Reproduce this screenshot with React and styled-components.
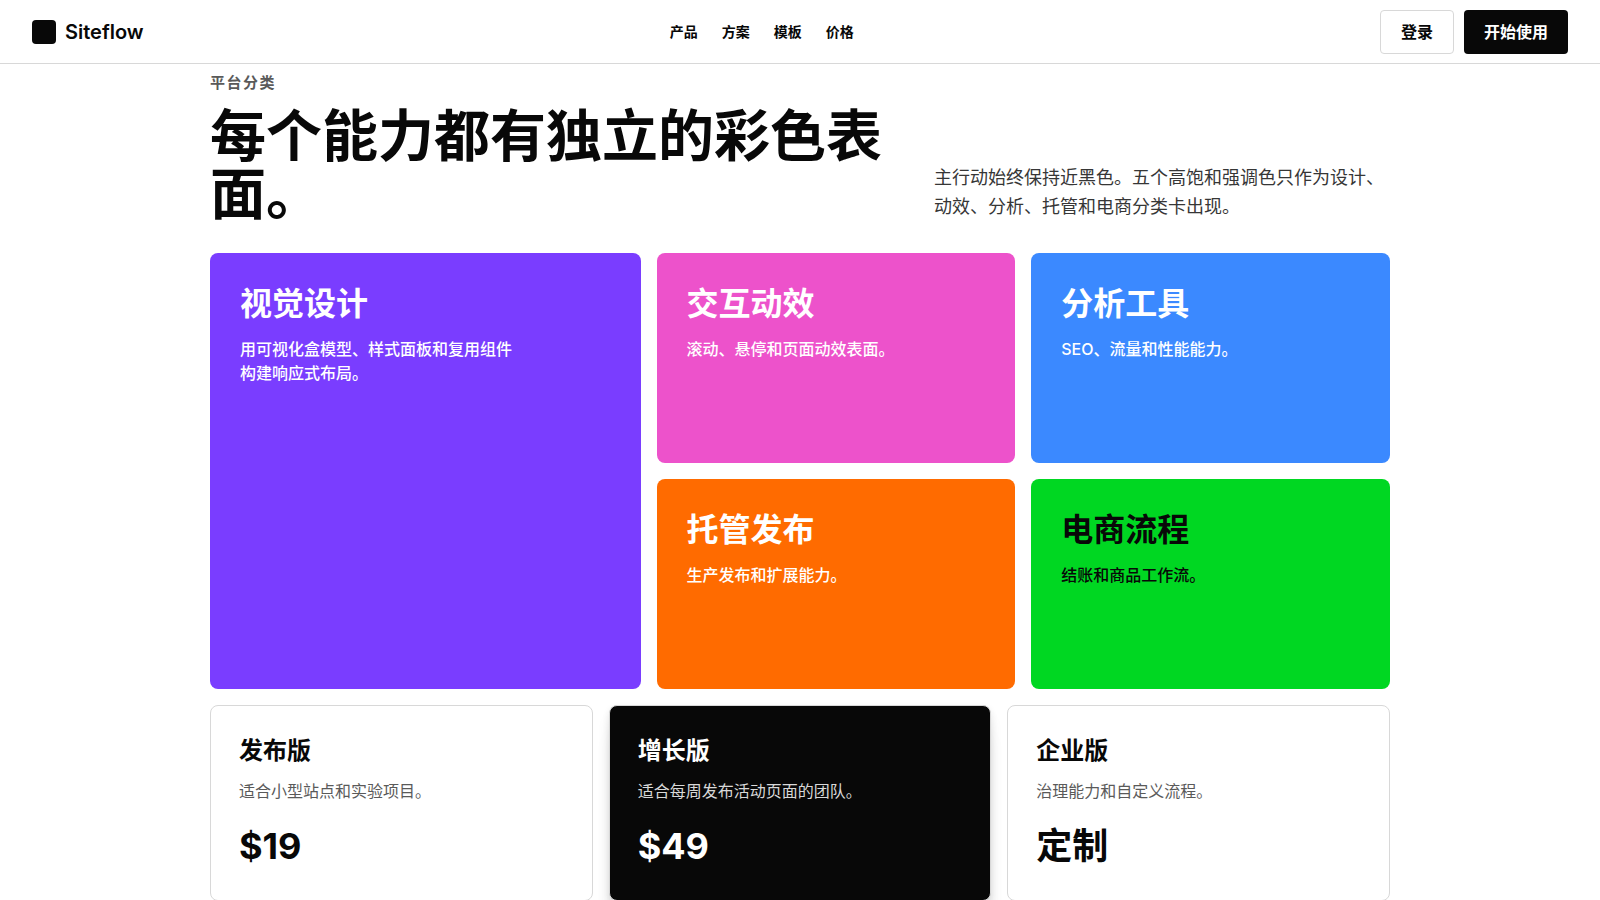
import React from 'react';
import styled, { createGlobalStyle } from 'styled-components';

const colors = {
  ink: '#080808',
  white: '#ffffff',
  line: '#d8d8d8',
  body: '#363636',
  muted: '#5a5a5a',
  purple: '#7a3dff',
  pink: '#ed52cb',
  blue: '#3b89ff',
  orange: '#ff6b00',
  green: '#00d722',
};

const NAV_ITEMS = ['产品', '方案', '模板', '价格'];

const CATEGORIES = [
  {
    title: '视觉设计',
    text: '用可视化盒模型、样式面板和复用组件构建响应式布局。',
    color: colors.purple,
    tall: true,
  },
  {
    title: '交互动效',
    text: '滚动、悬停和页面动效表面。',
    color: colors.pink,
  },
  {
    title: '分析工具',
    text: 'SEO、流量和性能能力。',
    color: colors.blue,
  },
  {
    title: '托管发布',
    text: '生产发布和扩展能力。',
    color: colors.orange,
  },
  {
    title: '电商流程',
    text: '结账和商品工作流。',
    color: colors.green,
    dark: true,
  },
];

const PLANS = [
  { name: '发布版', text: '适合小型站点和实验项目。', price: '$19' },
  {
    name: '增长版',
    text: '适合每周发布活动页面的团队。',
    price: '$49',
    featured: true,
  },
  { name: '企业版', text: '治理能力和自定义流程。', price: '定制' },
];

function App() {
  return (
    <>
      <GlobalStyle />
      <Header>
        <Brand href="#">
          <BrandMark />
          Siteflow
        </Brand>
        <Nav>
          {NAV_ITEMS.map((item) => (
            <a href="#" key={item}>
              {item}
            </a>
          ))}
        </Nav>
        <Actions>
          <OutlineButton type="button">登录</OutlineButton>
          <Button type="button">开始使用</Button>
        </Actions>
      </Header>
      <Main>
        <SectionHead>
          <div>
            <Eyebrow>平台分类</Eyebrow>
            <Title>每个能力都有独立的彩色表面。</Title>
          </div>
          <Lead>
            主行动始终保持近黑色。五个高饱和强调色只作为设计、动效、分析、托管和电商分类卡出现。
          </Lead>
        </SectionHead>
        <CategoryGrid>
          {CATEGORIES.map(({ title, text, color, tall, dark }) => (
            <CategoryCard key={title} $color={color} $tall={tall} $dark={dark}>
              <h3>{title}</h3>
              <p>{text}</p>
            </CategoryCard>
          ))}
        </CategoryGrid>
        <PlanGrid>
          {PLANS.map(({ name, text, price, featured }) => (
            <PlanCard key={name} $featured={featured}>
              <h3>{name}</h3>
              <p>{text}</p>
              <strong>{price}</strong>
            </PlanCard>
          ))}
        </PlanGrid>
      </Main>
    </>
  );
}

export default App;

const GlobalStyle = createGlobalStyle`
  * {
    box-sizing: border-box;
  }

  body {
    margin: 0;
    background: ${colors.white};
    color: ${colors.ink};
    font-family: Inter, 'Noto Sans CJK SC', sans-serif;
    font-size: 16px;
    line-height: 24px;
  }

  h2, h3, p {
    margin: 0;
  }

  a {
    color: inherit;
    text-decoration: none;
  }
`;

const Header = styled.header`
  display: flex;
  align-items: center;
  justify-content: space-between;
  height: 64px;
  padding: 0 32px;
  border-bottom: 1px solid ${colors.line};
`;

const Brand = styled.a`
  display: flex;
  align-items: center;
  gap: 9px;
  font-size: 20px;
  font-weight: 600;
`;

const BrandMark = styled.span`
  width: 24px;
  height: 24px;
  border-radius: 4px;
  background: ${colors.ink};
`;

const Nav = styled.nav`
  display: flex;
  gap: 24px;
  font-size: 14px;
  font-weight: 600;
`;

const Actions = styled.div`
  display: flex;
  gap: 10px;
`;

const Button = styled.button`
  height: 44px;
  padding: 0 20px;
  border: 0;
  border-radius: 4px;
  background: ${colors.ink};
  color: ${colors.white};
  font: inherit;
  font-weight: 600;
  cursor: pointer;
`;

const OutlineButton = styled(Button)`
  border: 1px solid ${colors.line};
  background: ${colors.white};
  color: ${colors.ink};
`;

const Main = styled.main`
  max-width: 1180px;
  margin: 0 auto;
  padding-top: 8px;
`;

const SectionHead = styled.div`
  display: grid;
  grid-template-columns: 3fr 2fr;
  gap: 40px;
  align-items: end;
  margin-bottom: 30px;
`;

const Eyebrow = styled.p`
  margin-bottom: 13px;
  color: ${colors.muted};
  font-size: 15px;
  font-weight: 600;
  line-height: 22px;
  letter-spacing: 0.1em;
`;

const Title = styled.h2`
  font-size: 56px;
  font-weight: 600;
  line-height: 58px;
`;

const Lead = styled.p`
  padding-bottom: 2px;
  color: ${colors.body};
  font-size: 18px;
  line-height: 29px;
`;

const CategoryGrid = styled.div`
  display: grid;
  grid-template-columns: 6fr 5fr 5fr;
  grid-auto-rows: minmax(210px, auto);
  gap: 16px;
`;

const CategoryCard = styled.article`
  grid-row: ${({ $tall }) => ($tall ? 'span 2' : 'auto')};
  padding: 30px;
  border-radius: 8px;
  background: ${({ $color }) => $color};
  color: ${({ $dark }) => ($dark ? colors.ink : colors.white)};

  > h3 {
    margin-bottom: 12px;
    font-size: 32px;
    font-weight: 600;
    line-height: 42px;
  }

  > p {
    max-width: 280px;
    font-weight: 500;
  }
`;

const PlanGrid = styled.div`
  display: grid;
  grid-template-columns: repeat(3, 1fr);
  gap: 16px;
  margin-top: 16px;
`;

const PlanCard = styled.article`
  padding: 29px 28px;
  border: 1px solid ${colors.line};
  border-radius: 8px;
  background: ${({ $featured }) => ($featured ? colors.ink : colors.white)};
  color: ${({ $featured }) => ($featured ? colors.white : colors.ink)};
  box-shadow: ${({ $featured }) =>
    $featured
      ? '0 30px 18px rgba(0, 0, 0, 0.04), 0 13px 13px rgba(0, 0, 0, 0.08), 0 3px 7px rgba(0, 0, 0, 0.09)'
      : 'none'};

  > h3 {
    margin-bottom: 12px;
    font-size: 24px;
    font-weight: 600;
    line-height: 32px;
  }

  > p {
    margin-bottom: 18px;
    color: ${({ $featured }) => ($featured ? colors.line : colors.muted)};
  }

  > strong {
    display: block;
    font-size: 36px;
    font-weight: 700;
    line-height: 50px;
  }
`;
